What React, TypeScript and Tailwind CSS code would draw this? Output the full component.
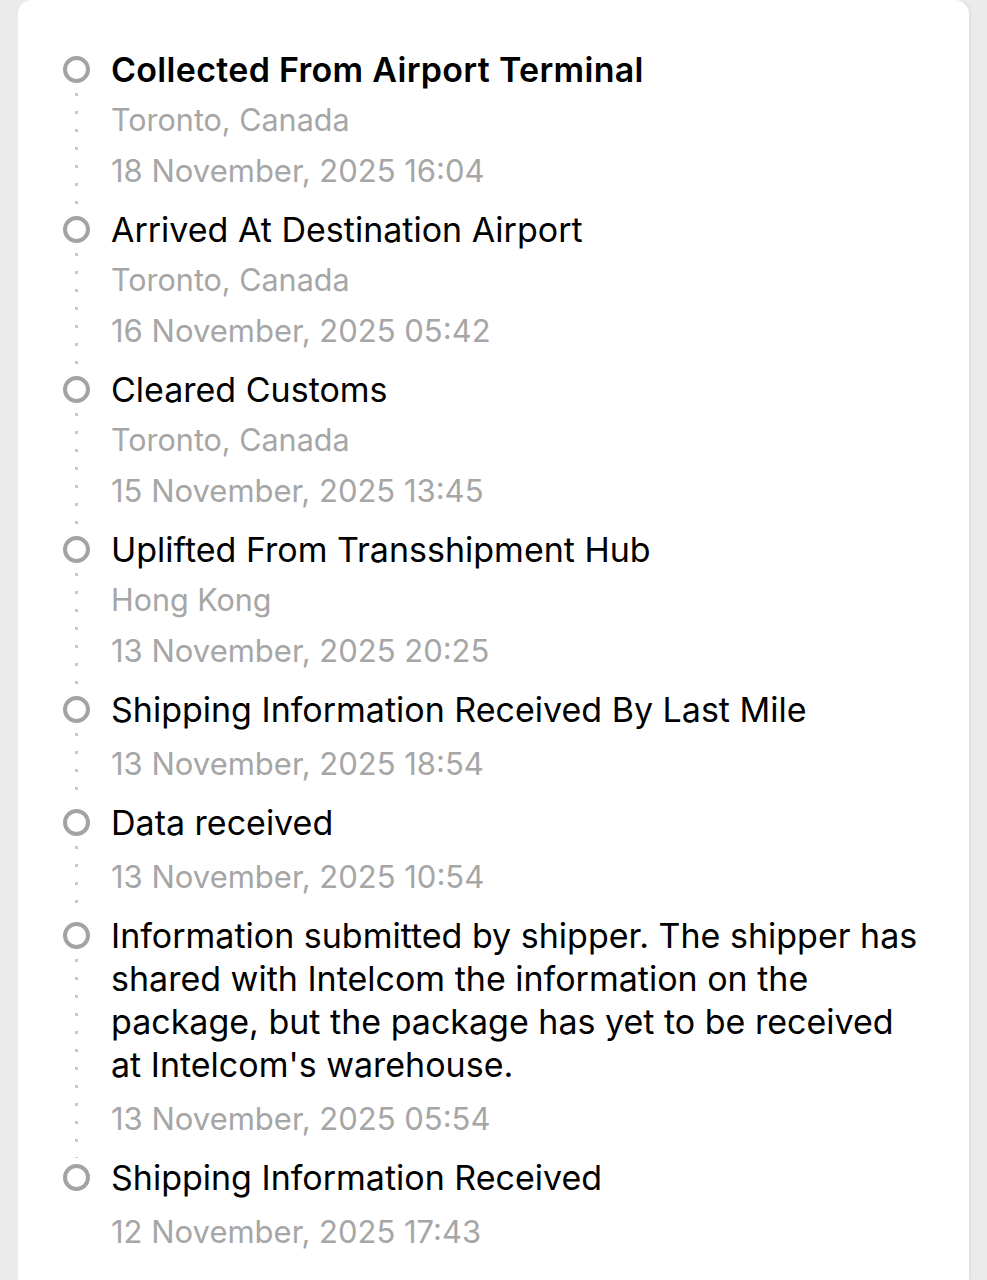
import React from "react";

type Event = {
  title: string;
  place?: string;
  date: string;
  bold?: boolean;
};

const events: Event[] = [
  { title: "Collected From Airport Terminal", place: "Toronto, Canada", date: "18 November, 2025 16:04", bold: true },
  { title: "Arrived At Destination Airport", place: "Toronto, Canada", date: "16 November, 2025 05:42" },
  { title: "Cleared Customs", place: "Toronto, Canada", date: "15 November, 2025 13:45" },
  { title: "Uplifted From Transshipment Hub", place: "Hong Kong", date: "13 November, 2025 20:25" },
  { title: "Shipping Information Received By Last Mile", date: "13 November, 2025 18:54" },
  { title: "Data received", date: "13 November, 2025 10:54" },
  {
    title:
      "Information submitted by shipper. The shipper has shared with Intelcom the information on the package, but the package has yet to be received at Intelcom's warehouse.",
    date: "13 November, 2025 05:54",
  },
  { title: "Shipping Information Received", date: "12 November, 2025 17:43" },
];

function Row({ ev, last }: { ev: Event; last: boolean }) {
  return (
    <div className={`flex ${last ? "pb-[8px]" : "pb-[16px]"}`}>
      <div className="w-[27px] mr-[21px] shrink-0 flex flex-col items-center">
        <div className="mt-[8px] w-[27px] h-[27px] rounded-full border-[4px] border-[#a3a3a3] shrink-0" />
        {!last && (
          <div className="mt-[10px] w-[3px] flex-1 -mb-[18px] bg-[linear-gradient(#c9c9c9_3px,transparent_3px)] bg-[length:3px_18px]" />
        )}
      </div>
      <div className="flex-1 min-w-0 pr-[40px]">
        <div
          className={`text-[34px] leading-[43px] text-black ${ev.bold ? "font-semibold tracking-[0.3px]" : "font-normal"}`}
        >
          {ev.title}
        </div>
        {ev.place && (
          <div className="mt-[7px] text-[30.5px] leading-[43px] text-[#a6a6a6]">{ev.place}</div>
        )}
        <div className={`${ev.place ? "mt-[8px]" : "mt-[11px]"} text-[31px] leading-[43px] text-[#a6a6a6]`}>
          {ev.date}
        </div>
      </div>
    </div>
  );
}

export default function App() {
  return (
    <div
      className="min-h-[1280px] bg-[#ebebeb] pl-[18px] pr-[18px]"
      style={{ fontFamily: "Inter, 'Noto Sans', 'Liberation Sans', sans-serif" }}
    >
      <div className="min-h-[1280px] bg-white rounded-t-[14px] pt-[48px] pl-[45px] shadow-[2px_0_3px_rgba(0,0,0,0.05)]">
        {events.map((ev, i) => (
          <Row key={i} ev={ev} last={i === events.length - 1} />
        ))}
      </div>
    </div>
  );
}
